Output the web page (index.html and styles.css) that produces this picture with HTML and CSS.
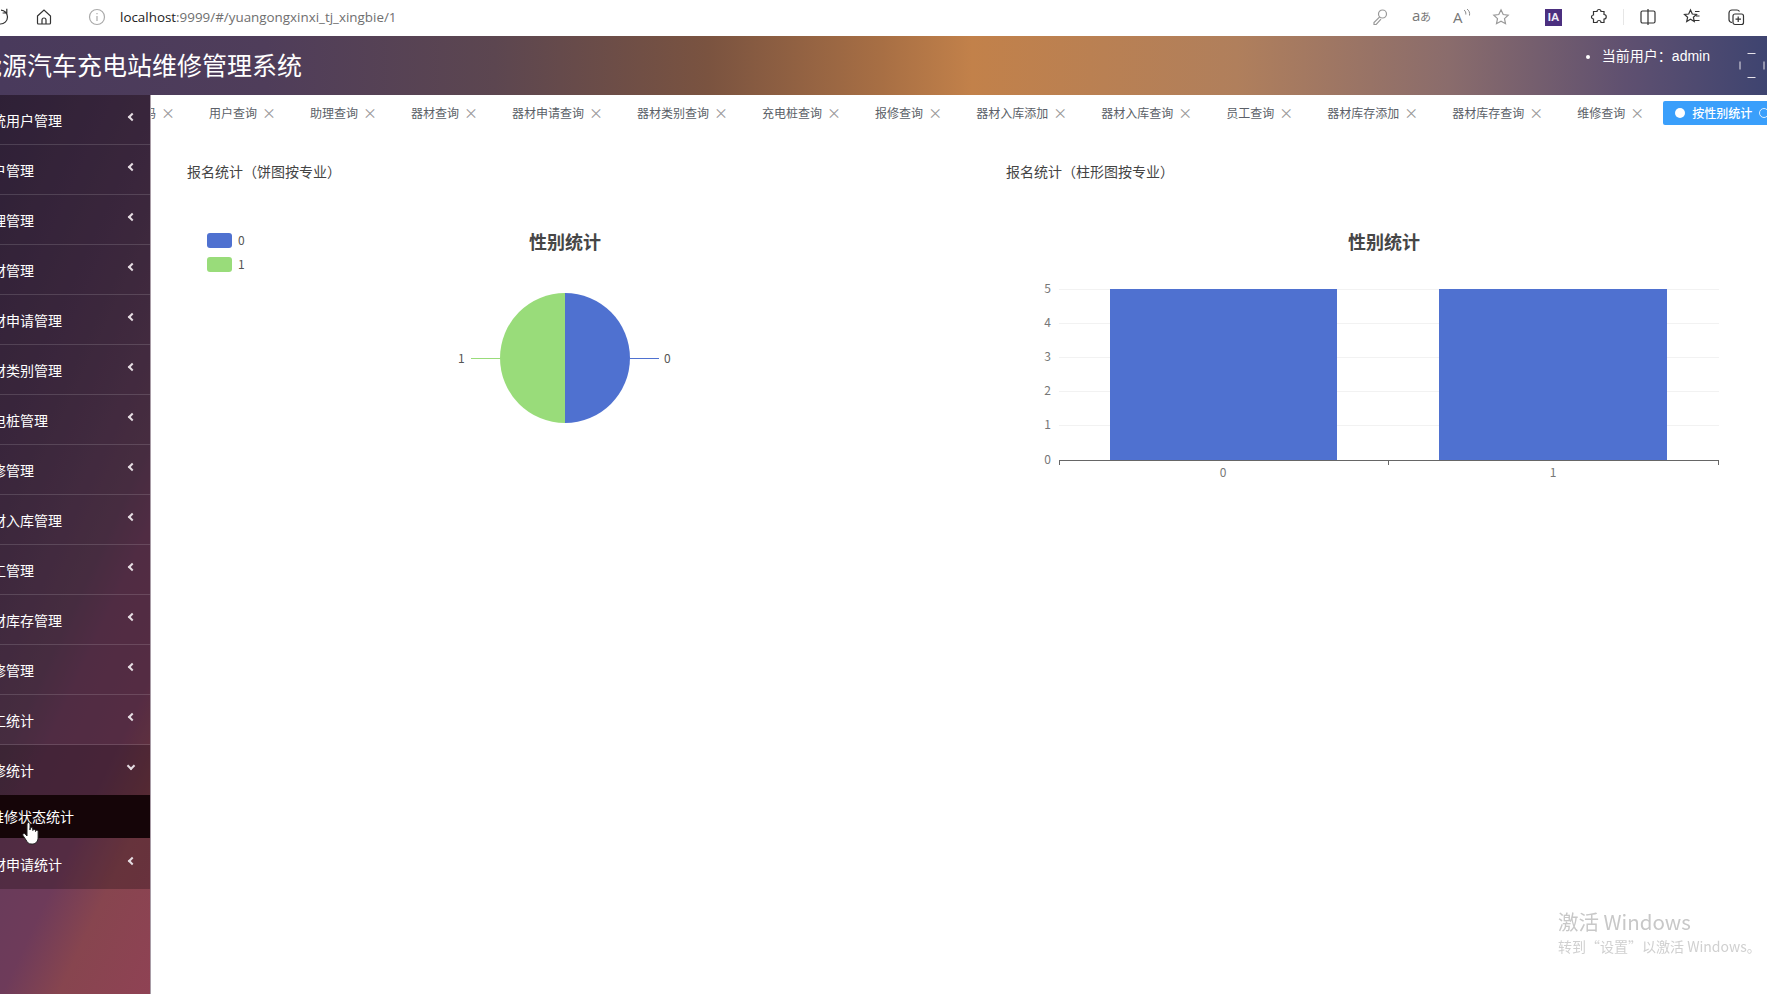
FILE: index.html
```html
<!DOCTYPE html>
<html lang="zh-CN">
<head>
  <meta charset="UTF-8" />
  <title>新能源汽车充电站维修管理系统</title>
  <link rel="stylesheet" href="styles.css">
</head>
<body>
  <!-- BROWSER BAR -->
  <div class="browser-bar">
    <div class="bar-left">
      <svg class="reload" width="9" height="18" viewBox="0 0 9 18"><path d="M1 2.100A7 7 0 0 1 7.500 9 7 7 0 0 1 0 16M6.800 .8v4.200H2.600"/></svg>
      <svg class="tool home" width="18" height="18" viewBox="0 0 18 18"><path d="M2.500 8 9 2l6.500 6v7a1 1 0 0 1-1 1h-11a1 1 0 0 1-1-1zM7 16v-4a2 2 0 0 1 4 0v4"/></svg>
      <svg class="tool info" width="18" height="18" viewBox="0 0 18 18"><circle cx="9" cy="9" r="7.500"/><path d="M9 8v5M9 5v1.200"/></svg>
      <div class="url"><b>localhost</b>:9999/#/yuangongxinxi_tj_xingbie/1</div>
    </div>
    <div class="bar-right">
      <svg class="tool faint ic-key" width="18" height="18" viewBox="0 0 18 18"><circle cx="11.500" cy="6" r="4"/><path d="M8.700 8.800 3 14.500V16.500h2.200L10 11.200"/></svg>
      <span class="tool-text translate">a<small>あ</small></span>
      <span class="tool-text read">A<svg class="waves" width="8" height="9" viewBox="0 0 8 9"><path d="M1 1c1.500 1 2 2.500 1.800 4.500M4 0c2 1.500 3 3.500 2.500 6.500"/></svg></span>
      <svg class="tool faint ic-star" width="18" height="18" viewBox="0 0 18 18"><path d="m9 1.800 2.200 4.700 5 .6-3.700 3.500 1 5.100L9 13.200l-4.500 2.500 1-5.100L1.800 7.100l5-.6z"/></svg>
      <div class="ia-badge">IA</div>
      <svg class="tool ic-puzzle" width="18" height="18" viewBox="0 0 18 18"><path d="M7 3.500a2 2 0 0 1 4 0H14v3a2 2 0 0 1 0 4.500v3.500h-3a2 2 0 0 0-4 0H3.500V11a2 2 0 0 1 0-4V3.500z"/></svg>
      <div class="bar-sep"></div>
      <svg class="tool ic-split" width="18" height="18" viewBox="0 0 18 18"><rect x="2" y="3" width="14" height="12" rx="1.500"/><path d="M9 1v16"/></svg>
      <svg class="tool ic-fav" width="18" height="18" viewBox="0 0 18 18"><path d="M7.500 2 9.300 6l4.200.4-3.100 2.900.9 4.200-3.800-2.200-3.800 2.200.9-4.200L1.500 6.400 5.700 6zM12 3.500h4.500M13 8h3.500M11.500 12.500h5"/></svg>
      <svg class="tool ic-coll" width="18" height="18" viewBox="0 0 18 18"><path d="M5 14.500A3 3 0 0 1 2 11.500V5a3 3 0 0 1 3-3h5a3 3 0 0 1 2.500 1.500"/><rect x="6" y="6" width="10.500" height="10.500" rx="2"/><path d="M11.200 8.500v5.500M8.500 11.200H14"/></svg>
    </div>
  </div>

  <!-- HEADER -->
  <header class="app-header">
    <h1>新能源汽车充电站维修管理系统</h1>
    <div class="user-box">
      <ul><li>当前用户：admin</li></ul>
      <svg class="avatar" width="26" height="26" viewBox="0 0 26 26"><path d="M8.500 1.500h8M8.500 25.500h8M1 9.500v8M25 9.500v8"/></svg>
    </div>
  </header>

  <div class="layout">
    <!-- SIDEBAR -->
    <aside class="sidebar">
      <div class="menu-item"><span>系统用户管理</span><i class="chev"></i></div>
      <div class="menu-item"><span>用户管理</span><i class="chev"></i></div>
      <div class="menu-item"><span>助理管理</span><i class="chev"></i></div>
      <div class="menu-item"><span>器材管理</span><i class="chev"></i></div>
      <div class="menu-item"><span>器材申请管理</span><i class="chev"></i></div>
      <div class="menu-item"><span>器材类别管理</span><i class="chev"></i></div>
      <div class="menu-item"><span>充电桩管理</span><i class="chev"></i></div>
      <div class="menu-item"><span>报修管理</span><i class="chev"></i></div>
      <div class="menu-item"><span>器材入库管理</span><i class="chev"></i></div>
      <div class="menu-item"><span>员工管理</span><i class="chev"></i></div>
      <div class="menu-item"><span>器材库存管理</span><i class="chev"></i></div>
      <div class="menu-item"><span>维修管理</span><i class="chev"></i></div>
      <div class="menu-item"><span>员工统计</span><i class="chev"></i></div>
      <div class="menu-item open"><span>维修统计</span><i class="chev"></i></div>
      <div class="sub-item"><span>维修状态统计</span></div>
      <div class="menu-item last"><span>器材申请统计</span><i class="chev"></i></div>
    </aside>

    <main class="main">
      <!-- TABS -->
      <div class="tabs">
        <div class="tab">修改密码<em>×</em></div>
        <div class="tab">用户查询<em>×</em></div>
        <div class="tab">助理查询<em>×</em></div>
        <div class="tab">器材查询<em>×</em></div>
        <div class="tab">器材申请查询<em>×</em></div>
        <div class="tab">器材类别查询<em>×</em></div>
        <div class="tab">充电桩查询<em>×</em></div>
        <div class="tab">报修查询<em>×</em></div>
        <div class="tab">器材入库添加<em>×</em></div>
        <div class="tab">器材入库查询<em>×</em></div>
        <div class="tab">员工查询<em>×</em></div>
        <div class="tab">器材库存添加<em>×</em></div>
        <div class="tab">器材库存查询<em>×</em></div>
        <div class="tab">维修查询<em>×</em></div>
        <div class="tab active"><u></u>按性别统计<s></s></div>
      </div>

      <!-- CHARTS -->
      <div class="panels">
        <section class="panel">
          <div class="panel-title">报名统计（饼图按专业）</div>
          <svg class="chart" width="756" height="330" viewBox="0 0 756 330">
            <text class="chart-title" x="378" y="56">性别统计</text>
            <rect x="20" y="40" width="25" height="15" rx="3" fill="#4f71d0"/>
            <text class="lbl" x="51" y="52">0</text>
            <rect x="20" y="64" width="25" height="15" rx="3" fill="#99dc7a"/>
            <text class="lbl" x="51" y="76">1</text>
            <path d="M378 100a65 65 0 0 1 0 130z" fill="#4f71d0"/>
            <path d="M378 100a65 65 0 0 0 0 130z" fill="#99dc7a"/>
            <path d="M443 165.500h29" stroke="#4f71d0" fill="none"/>
            <path d="M284 165.500h29" stroke="#99dc7a" fill="none"/>
            <text class="lbl" x="477" y="170">0</text>
            <text class="lbl" x="271" y="170">1</text>
          </svg>
        </section>
        <section class="panel">
          <div class="panel-title">报名统计（柱形图按专业）</div>
          <svg class="chart" width="756" height="330" viewBox="0 0 756 330">
            <text class="chart-title" x="378" y="56">性别统计</text>
            <g class="grid">
              <path d="M53 96.500h660M53 130.500h660M53 164.500h660M53 198.500h660M53 232.500h660"/>
            </g>
            <rect x="104" y="96" width="227" height="171" fill="#4f71d0"/>
            <rect x="433" y="96" width="228" height="171" fill="#4f71d0"/>
            <path class="axis" d="M53 267.500h660M53.500 267v5M382.500 267v5M712.500 267v5"/>
            <text class="tick" x="45" y="100">5</text>
            <text class="tick" x="45" y="134">4</text>
            <text class="tick" x="45" y="168">3</text>
            <text class="tick" x="45" y="202">2</text>
            <text class="tick" x="45" y="236">1</text>
            <text class="tick" x="45" y="271">0</text>
            <text class="tick mid" x="217" y="284">0</text>
            <text class="tick mid" x="547" y="284">1</text>
          </svg>
        </section>
      </div>
    </main>
  </div>

  <!-- OVERLAYS -->
  <svg class="cursor" width="20" height="24" viewBox="0 0 20 24"><path d="M6 11V3a1.500 1.500 0 0 1 3 0v6V8a1.400 1.400 0 0 1 2.800 0v1.500a1.400 1.400 0 0 1 2.700 0v1a1.300 1.300 0 0 1 2.600 0V16c0 4-2 7-5.500 7H10c-2.500 0-3.500-1.500-5-4l-3-4.500c-.8-1.500 1-2.800 2.200-1.500L6 15z"/></svg>
  <div class="watermark">
    <div class="wm-big">激活 Windows</div>
    <div class="wm-small">转到“设置”以激活 Windows。</div>
  </div>
</body>
</html>
```

FILE: styles.css
```css
/* ---------- BASE ---------- */
*{margin:0;padding:0;box-sizing:border-box;}
html,body{height:100%;overflow:hidden;background:#fff;}
body{font-family:"Noto Sans CJK SC","Noto Sans",sans-serif;color:#333;}

/* ---------- BROWSER BAR ---------- */
.browser-bar{height:36px;padding-bottom:2px;display:flex;justify-content:space-between;align-items:center;background:#fff;}
.bar-left,.bar-right{display:flex;align-items:center;}
.reload{flex:none;fill:none;stroke:#333;stroke-width:1.2;}
.tool{fill:none;stroke:#333;stroke-width:1.2;flex:none;}
.tool.faint{stroke:#999;}
.home{margin-left:26px;}
.info{margin-left:35px;stroke:#aaa;}
.url{margin-left:14px;font:13.4px "Open Sans",sans-serif;color:#6f6f6f;white-space:nowrap;}
.url b{font-weight:400;color:#222;}
.bar-right{padding-right:22px;}
.ic-key{margin-right:23px;}
.tool-text{width:22px;display:flex;font:15px "Open Sans",sans-serif;color:#777;white-space:nowrap;}
.tool-text small{font-size:11px;line-height:24px;}
.waves{margin-top:2px;fill:none;stroke:#888;stroke-width:1;}
.translate{margin-right:19px;}
.read{margin-right:17px;}
.ic-star{margin-right:35px;}
.ia-badge{width:17px;height:17px;margin-right:28px;background:#4b2f7f;color:#eeeaf6;font:700 11.500px/17px "Liberation Sans",sans-serif;text-align:center;}
.ic-puzzle{margin-right:15px;}
.bar-sep{width:1px;height:16px;margin-right:15px;background:#e6e6e6;}
.ic-split{margin-right:26px;}
.ic-fav{margin-right:26px;}

/* ---------- HEADER ---------- */
.app-header{
  height:59px;display:flex;justify-content:space-between;overflow:hidden;color:#fff;
  background:linear-gradient(90deg,#493a5c 0%,#4f3d5a 15%,#5c4650 28%,#7a5340 40%,#a86f44 50%,#c2814a 55%,#b07f5c 70%,#8a6c6c 82%,#5f5070 92%,#3e4470 100%);
}
.app-header h1{margin-left:-48px;font-size:25px;font-weight:400;line-height:56px;white-space:nowrap;}
.user-box{display:flex;}
.user-box ul{margin-top:10px;font:14px/20px "Liberation Sans","Noto Sans CJK SC",sans-serif;list-style:none;}
.user-box li{position:relative;}
.user-box li::before{content:'';position:absolute;left:-16px;top:9px;width:4px;height:4px;border-radius:50%;background:#fff;}
.avatar{margin:16px 2px 0 29px;fill:none;stroke:#e6e3ea;stroke-width:1;}

/* ---------- LAYOUT ---------- */
.layout{display:flex;height:899px;}

/* ---------- SIDEBAR ---------- */
.sidebar{
  width:151px;flex:none;position:relative;z-index:2;overflow:hidden;color:#fff;
  border-right:1px solid #a89ca6;
  background:linear-gradient(115deg,#372a47 0%,#4a3450 35%,#5a3c55 55%,#683b5a 62%,#6e3b5a 74%,#87454f 84%,#8f4254 100%);
}
.menu-item{
  height:49.980px;display:flex;justify-content:space-between;align-items:center;
  padding-right:15px;font-size:14px;white-space:nowrap;
  background:rgba(25,10,15,.3);border-bottom:1px solid rgba(255,255,255,.14);
}
.menu-item span,.sub-item span{margin-left:-22px;margin-top:1px;}
.chev{width:6px;height:6px;margin-top:-4px;border-left:2px solid #e5dde2;border-bottom:2px solid #e5dde2;transform:rotate(45deg);}
.menu-item.open{background:rgba(25,8,15,.45);border-bottom:0;}
.menu-item.open .chev{transform:rotate(-45deg);margin-top:-8px;margin-right:1px;}
.sub-item{height:43px;display:flex;align-items:center;font-size:14px;white-space:nowrap;background:#150508;}
.sub-item span{margin-left:-10px;margin-top:-1px;}
.menu-item.last{height:51px;border-bottom:0;}

/* ---------- MAIN ---------- */
.main{flex:1;min-width:0;}
.tabs{display:flex;height:30px;margin-left:-58px;padding-top:6px;}
.tab{height:24px;padding-left:15px;padding-right:12px;padding-bottom:2px;display:flex;align-items:center;flex:none;font-size:12px;color:#5b5f68;white-space:nowrap;}
.tab em{width:12px;margin-left:5px;margin-right:9px;font-style:normal;font-size:14px;color:#999;text-align:center;}
.tab.active{position:relative;padding:0 0 2px 29px;width:120px;background:#3a9ffb;border-radius:2px;color:#fff;font-weight:500;}
.tab.active u{position:absolute;left:12px;top:7px;width:10px;height:10px;border-radius:50%;background:#fff;}
.tab.active s{position:absolute;left:96px;top:7px;width:10px;height:10px;border:1px solid #dceeff;border-radius:50%;}

.panels{display:grid;grid-template-columns:819px 819px;padding:36px 0 0 36px;}
.panel-title{font-size:14px;line-height:20px;color:#444;}
.chart{display:block;margin-top:12px;}
.chart text{font-family:"Noto Sans CJK SC","Noto Sans",sans-serif;}
.chart .chart-title{font-size:18px;font-weight:700;fill:#464646;text-anchor:middle;}
.lbl{font-size:12px;fill:#555;}
.grid path{stroke:#f2f2f2;fill:none;}
.axis{stroke:#666;fill:none;}
.tick{font-size:12px;fill:#777;text-anchor:end;}
.tick.mid{text-anchor:middle;}

/* ---------- OVERLAYS ---------- */
.cursor{position:fixed;left:21px;top:821px;z-index:5;fill:#fff;stroke:#222;stroke-width:1;}
.watermark{position:fixed;left:1558px;top:908px;color:#c8c8c8;white-space:nowrap;}
.wm-big{font-size:20.500px;line-height:27px;}
.wm-small{font-size:14px;line-height:22px;color:#d0d0d0;}
```
